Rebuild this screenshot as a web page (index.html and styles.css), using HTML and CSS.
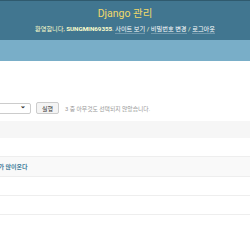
FILE: index.html
```html
<!DOCTYPE html>
<html lang="ko">
<head>
    <meta charset="UTF-8">
    <meta name="viewport" content="width=device-width, initial-scale=1.0">
    <title>Django 관리</title>
    <link rel="stylesheet" href="styles.css">
</head>
<body>
    <div class="header">
        <div class="branding">Django 관리</div>
        <div class="user-tools">
            환영합니다, <strong>sungmin69355</strong>.
            <a href="#">사이트 보기</a> /
            <a href="#">비밀번호 변경</a> /
            <a href="#">로그아웃</a>
        </div>
    </div>
    <div class="breadcrumbs"></div>

    <div class="content">
        <div class="actions">
            <div class="select-box"><span class="chevron">⌄</span></div>
            <button class="go-btn">실행</button>
            <span class="counter">3 중 아무것도 선택되지 않았습니다.</span>
        </div>
        <div class="table-head"></div>
        <div class="row"></div>
        <div class="row row-alt"><span class="cell-link">귀가 많이온다</span></div>
        <div class="row"></div>
        <div class="row"></div>
    </div>
</body>
</html>
```

FILE: styles.css
```css
body {
    margin: 0;
    font-family: Roboto, "Noto Sans CJK KR", sans-serif;
    background-color: white;
    overflow: hidden;
}
.header {
    height: 39px;
    background-color: #417690;
    border-top: 1px solid #2f5a6e;
    text-align: center;
}
.branding {
    padding-top: 6px;
    font-size: 10.5px;
    line-height: 14px;
    color: #f0d96b;
}
.user-tools {
    margin-top: 4px;
    font-size: 6.2px;
    line-height: 8px;
    color: #ffffcc;
}
.user-tools strong {
    text-transform: uppercase;
}
.user-tools a {
    color: white;
    text-decoration: none;
    border-bottom: 1px solid rgba(255,255,255,0.25);
}
.breadcrumbs {
    height: 21px;
    background-color: #79aec8;
}
.content {
    padding-top: 41px;
}
.actions {
    display: flex;
    align-items: center;
    height: 12px;
    margin-bottom: 7px;
}
.select-box {
    width: 41px;
    height: 11px;
    margin-left: -10px;
    border: 1px solid #cccccc;
    border-radius: 2px;
    display: flex;
    align-items: center;
    justify-content: flex-end;
    padding-right: 4px;
    box-sizing: border-box;
}
.chevron {
    font-size: 7px;
    line-height: 7px;
    font-weight: bold;
    color: #333;
    margin-top: -3px;
}
.go-btn {
    margin-left: 5px;
    width: 23px;
    height: 12px;
    padding: 0;
    border: 1px solid #cccccc;
    border-radius: 2px;
    background-color: #f4f4f4;
    font-family: Roboto, "Noto Sans CJK KR", sans-serif;
    font-size: 6px;
    color: #333;
}
.counter {
    margin-left: 6px;
    font-size: 5.8px;
    color: #999999;
}
.table-head {
    height: 17px;
    background-color: #f6f6f6;
}
.row {
    height: 18px;
    border-bottom: 1px solid #eeeeee;
    display: flex;
    align-items: center;
}
.row-alt {
    height: 19px;
    background-color: #f9f9f9;
}
.cell-link {
    margin-left: -7px;
    font-size: 6px;
    font-weight: bold;
    color: #447e9b;
}
```
